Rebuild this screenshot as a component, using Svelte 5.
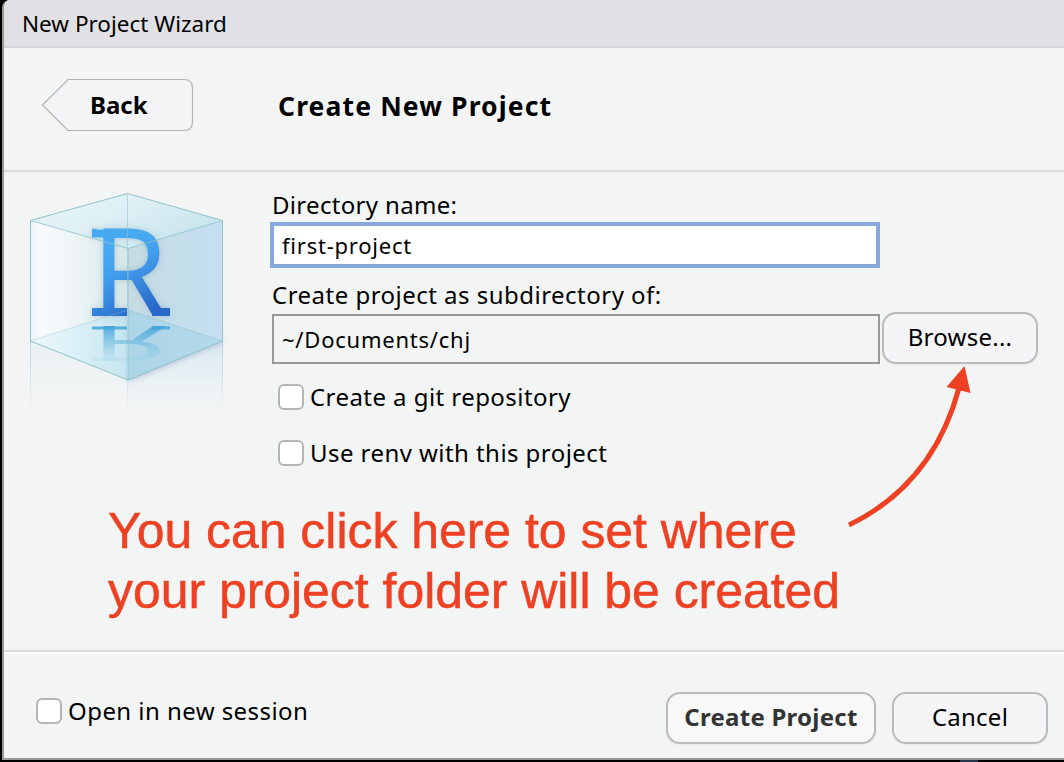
<script>
  let directory = $state('first-project');
  let parent = $state('~/Documents/chj');
  let options = $state([
    { label: 'Create a git repository', on: false },
    { label: 'Use renv with this project', on: false }
  ]);
  let newSession = $state(false);
</script>

<div class="screen">
  <div class="window">
    <div class="titlebar">New Project Wizard</div>

    <header>
      <button class="back">
        <svg width="153" height="54" viewBox="0 0 153 54">
          <path d="M27 1.500H143Q151.500 1.500 151.500 10V44Q151.500 52.500 143 52.500H27L1.500 27Z" fill="#f4f4f6" stroke="#b3b3b4" stroke-width="1.200" />
        </svg>
        <span>Back</span>
      </button>
      <h1>Create New Project</h1>
    </header>

    <main>
      <div class="logo">
        <svg width="220" height="240" viewBox="0 0 220 240">
          <defs>
            <linearGradient id="left" x1="0" x2="1"><stop offset="0" stop-color="#eaf3f9" /><stop offset=".1" stop-color="#f8fafc" /><stop offset=".45" stop-color="#eef4f6" /><stop offset="1" stop-color="#d3e7e9" /></linearGradient>
            <linearGradient id="right" x1="0" x2="1"><stop offset="0" stop-color="#c5dce3" /><stop offset="1" stop-color="#c4dff2" /></linearGradient>
            <linearGradient id="top" x1="0" x2="1" y1="0" y2=".5"><stop offset="0" stop-color="#e7f5f9" /><stop offset=".5" stop-color="#def0f5" /><stop offset="1" stop-color="#c8e5ed" /></linearGradient>
            <linearGradient id="floor" x1="0" x2="1"><stop offset="0" stop-color="#eef8fc" /><stop offset=".49" stop-color="#c6e6ef" /><stop offset=".51" stop-color="#acd5e7" /><stop offset="1" stop-color="#b5d9ec" /></linearGradient>
            <linearGradient id="ink" gradientUnits="userSpaceOnUse" x1="85" y1="60" x2="120" y2="124"><stop offset="0" stop-color="#47aaf1" /><stop offset=".35" stop-color="#429ced" /><stop offset="1" stop-color="#2868c8" /></linearGradient>
            <linearGradient id="mirror" gradientUnits="userSpaceOnUse" x1="0" x2="0" y1="124" y2="36"><stop offset="0" stop-color="#43a3dc" stop-opacity=".9" /><stop offset="1" stop-color="#83c7e4" stop-opacity=".1" /></linearGradient>
            <linearGradient id="fade" x1="0" x2="0" y1="0" y2="1"><stop offset="0" stop-color="#cfe3f1" stop-opacity=".75" /><stop offset="1" stop-color="#e5eef5" stop-opacity="0" /></linearGradient>
            <linearGradient id="edge" x1="0" x2="0" y1="0" y2="1"><stop offset="0" stop-color="#9ec5d1" stop-opacity=".6" /><stop offset="1" stop-color="#9ec5d1" stop-opacity="0" /></linearGradient>
            <filter id="soft" x="-20%" y="-20%" width="140%" height="140%"><feGaussianBlur stdDeviation="3" /></filter>
            <g id="mark">
              <text class="r" x="71.500" y="124">R</text>
              <path d="M72 116H107V124H72ZM132 116H150V124H132ZM72 36.500Q80 38.500 96 37.500V45.500H72Z" />
            </g>
          </defs>
          <path d="M10 149L107 188V225H10Z" fill="url(#fade)" opacity=".35" />
          <path d="M107 188L203 149V225H107Z" fill="url(#fade)" />
          <path d="M10 149h1v75h-1zM107 188h1v37h-1zM202 149h1v75h-1z" fill="url(#edge)" />
          <path d="M107 118L205 149L108 189Z" fill="#8295bd" opacity=".6" filter="url(#soft)" />
          <path d="M10.500 28.500L108 55.500V118L10.500 149Z" fill="url(#left)" />
          <path d="M202.500 28.500L108 55.500V118L202.500 149Z" fill="url(#right)" />
          <path d="M10.500 28.500L107.500 1.500L202.500 28.500L108 56.500Z" fill="url(#top)" />
          <path d="M10.500 149L107.500 117L202.500 149L108 188Z" fill="url(#floor)" />
          <use href="#mark" fill="#7695a8" opacity=".4" filter="url(#soft)" />
          <use href="#mark" fill="url(#ink)" />
          <use href="#mark" transform="translate(0 184) scale(1 -.4)" fill="url(#mirror)" />
          <g fill="none" stroke="#8fc2cb" stroke-width="1">
            <path d="M10.500 28.500L107.500 1.500L202.500 28.500V149L108 188L10.500 149Z" />
            <path d="M10.500 28.500L108 56.500L202.500 28.500" opacity=".8" />
            <path d="M107.500 1.500V118L202.500 149M108.300 56V188" opacity=".55" />
            <path d="M10.500 149L107.500 118" opacity=".35" />
          </g>
        </svg>
      </div>

      <div class="form">
        <label class="lbl" for="dir">Directory name:</label>
        <div class="field focus"><input id="dir" class="dir" bind:value={directory} spellcheck="false" /></div>
        <label class="lbl second" for="parent">Create project as subdirectory of:</label>
        <div class="row">
          <div class="field"><input id="parent" bind:value={parent} readonly spellcheck="false" /></div>
          <button class="btn browse">Browse...</button>
        </div>
        <div class="checks">
          {#each options as o}
            <label class="check"><input type="checkbox" bind:checked={o.on} /><span>{o.label}</span></label>
          {/each}
        </div>
      </div>

      <div class="note"><div>You can click here to set where</div><div>your project folder will be created</div></div>
      <svg class="arrow" width="140" height="180" viewBox="840 360 140 180">
        <path d="M849 525C905 498 942 451 959 388" fill="none" stroke="#ee4023" stroke-width="5" />
        <path d="M964.500 366L946.500 387L970.500 393Z" fill="#ee4023" />
      </svg>
    </main>

    <footer>
      <label class="check"><input type="checkbox" bind:checked={newSession} /><span>Open in new session</span></label>
      <div class="actions">
        <button class="btn create">Create Project</button>
        <button class="btn cancel">Cancel</button>
      </div>
    </footer>
  </div>
  <i class="speck"></i>
</div>

<style>
  :global(body) { margin: 0; overflow: hidden; }
  * { box-sizing: border-box; }
  .screen { position: relative; width: 1064px; height: 762px; background: #000; padding: 0 0 2px 2px; font-family: "Noto Sans", "Open Sans", sans-serif; font-size: 24px; line-height: 32px; color: #000; white-space: nowrap; }
  .window { height: 760px; border-left: 2px solid #999; border-bottom: 2px solid #999; border-top-left-radius: 8px; background: #f3f5f4; display: flex; flex-direction: column; overflow: hidden; }
  .titlebar { height: 48px; flex: none; background: #e1e1e5; border-bottom: 2px solid #d6d6da; padding: 8px 0 0 18px; font-size: 22.500px; }
  header { height: 124px; flex: none; border-bottom: 2px solid #d9dbda; display: flex; padding: 30px 0 0 37px; }
  button { font: inherit; color: inherit; padding: 0; border: 0; background: none; }
  .back { display: grid; width: 153px; height: 54px; }
  .back > * { grid-area: 1 / 1; }
  .back span { padding: 11px 0 0 49px; text-align: left; font-weight: 700; }
  h1 { margin: 12px 0 0 84px; font-size: 26.500px; line-height: 32px; font-weight: 700; letter-spacing: 1.130px; }
  main { position: relative; height: 478px; flex: none; display: flex; }
  .logo { width: 266px; padding: 20px 0 0 16px; }
  .logo svg { display: block; }
  .r { font-family: "Noto Sans", sans-serif; font-size: 122.500px; }
  .form { flex: 1; padding-top: 17px; }
  .lbl { display: block; height: 33px; padding-left: 2px; letter-spacing: .320px; }
  .second { height: 42px; padding-top: 11px; letter-spacing: .480px; }
  .field { height: 50px; width: 608px; margin-left: 2px; border: 2px solid #999; padding: 0 8px; display: flex; }
  .focus { height: 46px; width: 610px; margin-left: 0; border: 4px solid #87a8dc; background: #fff; }
  .field input { flex: 1; min-width: 0; border: 0; padding: 0; outline: 0; background: none; color: #000; font: 22px "Noto Sans", sans-serif; letter-spacing: .770px; }
  .row { display: flex; align-items: flex-start; gap: 2px; margin-top: 4px; }
  .btn { height: 52px; border: 2px solid #bbb; border-radius: 14px; background: #f5f5f8; box-shadow: 0 1px 2px #0000000d; text-align: center; padding-bottom: 2px; letter-spacing: .250px; }
  .browse { width: 156px; margin-top: -2px; }
  .checks { display: grid; gap: 24px; padding: 17px 0 0 8px; }
  .check { display: flex; align-items: center; gap: 6px; height: 32px; letter-spacing: .440px; }
  .check input { appearance: none; width: 26px; height: 26px; margin: 0; border: 2px solid #b5b5b5; border-radius: 6px; background: #fff; flex: none; }
  .note { position: absolute; left: 104px; top: 329px; font: 49.900px/60px "Liberation Sans", sans-serif; color: #ee4023; -webkit-text-stroke: .5px #ee4023; }
  .arrow { position: absolute; left: 836px; top: 188px; }
  footer { flex: 1; border-top: 2px solid #dadcdb; box-shadow: inset 0 2px #fcfcfc; display: flex; justify-content: space-between; padding: 40px 16px 0 32px; }
  footer .check { margin-top: 3px; }
  .actions { display: flex; gap: 16px; }
  .create { width: 210px; font-weight: 700; color: #333; background: #f8f8f8; }
  .cancel { width: 156px; }
  .speck { position: absolute; left: 960px; bottom: 0; width: 18px; height: 2px; background: #26384a; }
</style>
